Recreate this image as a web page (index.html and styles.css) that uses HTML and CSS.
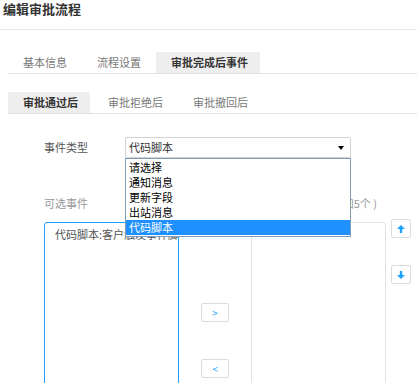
FILE: index.html
```html
<!DOCTYPE html>
<html>
<head>
    <meta charset="utf-8">
    <title>编辑审批流程</title>
    <link rel="stylesheet" href="styles.css">
</head>
<body>
    <h1 class="title">编辑审批流程</h1>

    <ul class="tabs">
        <li>基本信息</li>
        <li>流程设置</li>
        <li class="active">审批完成后事件</li>
    </ul>

    <ul class="tabs">
        <li class="active">审批通过后</li>
        <li>审批拒绝后</li>
        <li>审批撤回后</li>
    </ul>

    <div class="form">
        <div class="field">
            <label class="field-label">事件类型</label>
            <div class="select">
                <div class="select-value">代码脚本</div>
                <span class="select-arrow"></span>
                <ul class="select-menu">
                    <li>请选择</li>
                    <li>通知消息</li>
                    <li>更新字段</li>
                    <li>出站消息</li>
                    <li class="selected">代码脚本</li>
                </ul>
            </div>
        </div>

        <div class="transfer">
            <div class="transfer-col">
                <div class="transfer-title">可选事件</div>
                <div class="transfer-box focus">
                    <div class="transfer-item">代码脚本:客户触发事件脚本</div>
                </div>
            </div>
            <div class="transfer-actions">
                <button class="btn">&gt;</button>
                <button class="btn">&lt;</button>
            </div>
            <div class="transfer-col">
                <div class="transfer-title">已选事件(最多可添加5个 )</div>
                <div class="transfer-box"></div>
            </div>
            <div class="sort-actions">
                <button class="btn btn-sort">
                    <svg width="8" height="8" viewBox="0 0 8 8"><path d="M4 0L8 4H5.2V8H2.8V4H0Z" fill="#1e9fff"/></svg>
                </button>
                <button class="btn btn-sort">
                    <svg width="8" height="8" viewBox="0 0 8 8"><path d="M4 8L8 4H5.2V0H2.8V4H0Z" fill="#1e9fff"/></svg>
                </button>
            </div>
        </div>
    </div>
</body>
</html>
```

FILE: styles.css
```css
body {
    margin: 0;
    font-family: "Microsoft YaHei", "Noto Sans CJK SC", sans-serif;
    font-size: 11px;
    color: #333;
    background: #fff;
}
.title {
    margin: 0;
    padding: 0 3px 12px;
    font-size: 13px;
    line-height: 17px;
    font-weight: bold;
    color: #333;
    border-bottom: 1px solid #e6e6e6;
}
.tabs {
    display: flex;
    list-style: none;
    margin: 22px 0 0 8px;
    padding: 0;
    border-bottom: 1px solid #e2e2e2;
}
.tabs + .tabs {
    margin-top: 18px;
}
.tabs li {
    height: 21px;
    line-height: 21px;
    padding: 0 12px 0 15px;
    margin-right: 3px;
    color: #777;
    border-radius: 2px 2px 0 0;
}
.tabs li.active {
    background: #eee;
    color: #333;
    font-weight: bold;
}
.form {
    margin-top: 23px;
    padding-left: 44px;
}
.field {
    display: flex;
    align-items: center;
}
.field-label {
    width: 81px;
    color: #555;
    line-height: 21px;
}
.select {
    position: relative;
    width: 226px;
    height: 21px;
    box-sizing: border-box;
    border: 1px solid #d2d2d2;
    border-radius: 2px;
    padding-left: 3px;
    line-height: 19px;
    color: #333;
}
.select-arrow {
    position: absolute;
    right: 6px;
    top: 8px;
    border-left: 3px solid transparent;
    border-right: 3px solid transparent;
    border-top: 4px solid #000;
}
.select-menu {
    position: absolute;
    top: 20px;
    left: -1px;
    width: 226px;
    box-sizing: border-box;
    margin: 0;
    padding: 1px 0;
    list-style: none;
    background: #fff;
    border: 1px solid #7f9db9;
    z-index: 10;
}
.select-menu li {
    height: 15px;
    line-height: 15px;
    padding-left: 3px;
    color: #000;
}
.select-menu li.selected {
    background: #1e90ff;
    color: #fff;
}
.transfer {
    display: flex;
    margin-top: 38px;
}
.transfer-col {
    width: 135px;
}
.transfer-title {
    line-height: 15px;
    color: #999;
    white-space: nowrap;
    margin-bottom: 11px;
}
.transfer-box {
    height: 200px;
    box-sizing: border-box;
    border: 1px solid #e2e2e2;
    border-radius: 3px;
    overflow: hidden;
}
.transfer-box.focus {
    border-color: #1e9fff;
}
.transfer-item {
    padding: 4px 10px;
    line-height: 15px;
    color: #555;
    white-space: nowrap;
}
.transfer-actions {
    width: 72px;
    display: flex;
    flex-direction: column;
    align-items: center;
    gap: 37px;
    padding-top: 107px;
}
.btn {
    width: 28px;
    height: 19px;
    padding: 0;
    border: 1px solid #dcdcdc;
    border-radius: 2px;
    background: #fff;
    color: #1e9fff;
    font-family: inherit;
    font-size: 10px;
    line-height: 17px;
}
.sort-actions {
    display: flex;
    flex-direction: column;
    gap: 27px;
    margin-left: 5px;
    padding-top: 23px;
}
.btn-sort {
    width: 20px;
    display: flex;
    align-items: center;
    justify-content: center;
}
```
